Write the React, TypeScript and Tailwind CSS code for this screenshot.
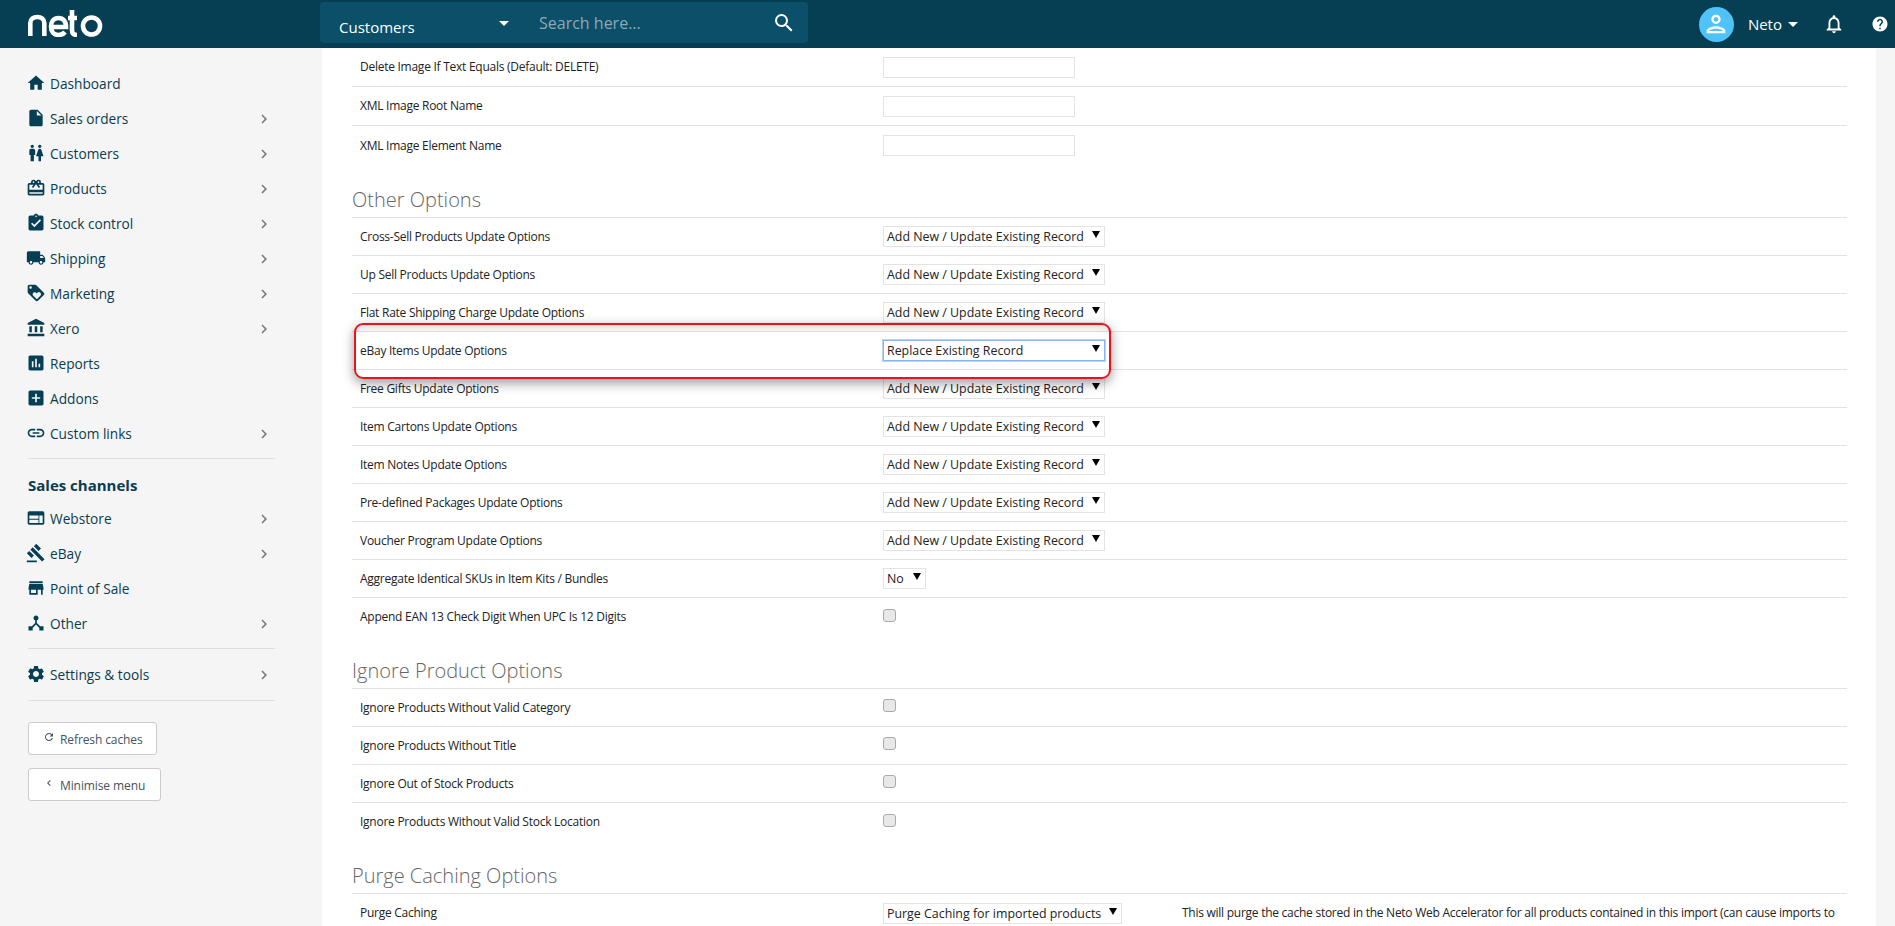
import React from "react"
import {
  MdAccountBalance,
  MdAddBox,
  MdArrowDropDown,
  MdAssessment,
  MdAssignmentTurnedIn,
  MdCardGiftcard,
  MdChevronLeft,
  MdChevronRight,
  MdDeviceHub,
  MdGavel,
  MdHelp,
  MdHome,
  MdInsertDriveFile,
  MdLink,
  MdLocalShipping,
  MdLoyalty,
  MdNotificationsNone,
  MdOutlinePerson,
  MdRefresh,
  MdSearch,
  MdSettings,
  MdStore,
  MdWc,
  MdWeb,
} from "react-icons/md"

const font = "font-['Open_Sans',sans-serif]"

const NavItem = ({ icon: Icon, label, more = true }: { icon: any; label: string; more?: boolean }) => (
  <div className="flex items-center h-[35px] w-[247px] text-[13.7px] text-[#0b3c50]">
    <Icon className="w-5 h-5 -ml-[2px] mr-1 -mt-0.5 text-[#063f54]" />
    <span className="flex-1 mt-[2px]">{label}</span>
    {more && <MdChevronRight className="w-[18px] h-[18px] mr-[2px] mt-[1px] text-[#777]" />}
  </div>
)

const Divider = () => <div className="w-[247px] border-t border-[#ddd]" />

const Row = ({ label, last, tall, children }: { label: string; last?: boolean; tall?: boolean; children?: React.ReactNode }) => (
  <div
    className={`flex items-center pl-2 text-[12px] tracking-[-0.26px] text-[#222] ${tall ? "h-[39px]" : "h-[38px]"} ${
      last ? "" : "border-b border-[#e2e2e2]"
    }`}
  >
    <div className="w-[523px] shrink-0">{label}</div>
    {children}
  </div>
)

const Input = () => <div className="w-[192px] h-[21px] bg-white border border-[#e3e3e3]" />

const Select = ({ value, w = "w-[222px]", focus }: { value: string; w?: string; focus?: boolean }) => (
  <div
    className={`${w} h-[21px] flex items-center justify-between px-[3px] bg-white border text-[12.4px] tracking-normal whitespace-nowrap text-[#222] ${
      focus ? "border-[#8ab4f0] shadow-[0_0_0_1px_#b9d2f7]" : "border-[#e3e3e3]"
    }`}
  >
    <span className="mt-[2px]">{value}</span>
    <svg viewBox="0 0 8 7" className="w-2 h-[7px] mr-[1px] -mt-1 fill-black">
      <path d="M0 0h8L4 7z" />
    </svg>
  </div>
)

const Check = () => (
  <div className="w-[13px] h-[13px] -mt-1 rounded-[3px] border border-[#aaa] bg-[#e8e8e8]" />
)

const Heading = ({ children }: { children: React.ReactNode }) => (
  <div className="h-[53px] flex items-end pb-[2px] border-b border-[#e2e2e2] text-[20px] font-light text-[#666]">
    {children}
  </div>
)

const updateOptions = [
  "Cross-Sell Products Update Options",
  "Up Sell Products Update Options",
  "Flat Rate Shipping Charge Update Options",
  "eBay Items Update Options",
  "Free Gifts Update Options",
  "Item Cartons Update Options",
  "Item Notes Update Options",
  "Pre-defined Packages Update Options",
  "Voucher Program Update Options",
]

const ignoreOptions = [
  "Ignore Products Without Valid Category",
  "Ignore Products Without Title",
  "Ignore Out of Stock Products",
  "Ignore Products Without Valid Stock Location",
]

const App = () => {
  return (
    <div className={`h-screen flex flex-col overflow-hidden bg-white ${font}`}>
      <header className="h-12 shrink-0 flex items-center bg-[#063f54] text-white">
        <div className="w-[320px] shrink-0 pl-7">
          <svg viewBox="0 0 76 30" className="w-[76px] h-[30px] -mt-1 fill-none stroke-white stroke-[4.6]">
            <path d="M2.300 29V16c0-4 3-6 7-6s7 2 7 6v13" />
            <path d="M23 20h15c0-6-3-9-7.500-9S23 14 23 19.500 26 28 30.500 28c3 0 5-1 6.500-3" />
            <path d="M44 3v20c0 3 1 5 5 5M40 11h9" />
            <circle cx="63.500" cy="19" r="8.500" />
          </svg>
        </div>
        <div className="w-[488px] h-[41px] -mt-[3px] flex items-center rounded bg-[#0b4f69]">
          <div className="w-[219px] pl-[19px] flex items-center justify-between pr-[24px]">
            <span className="text-[15px] mt-[10px]">Customers</span>
            <MdArrowDropDown className="w-6 h-6 -mr-[1px]" />
          </div>
          <span className="flex-1 text-[16px] text-[#8ea9b5]">Search here...</span>
          <MdSearch className="w-6 h-6 mr-3" />
        </div>
        <div className="flex-1" />
        <div className="w-[35px] h-[35px] rounded-full bg-[#4fc3f7] flex items-center justify-center">
          <MdOutlinePerson className="w-7 h-7" />
        </div>
        <span className="ml-[14px] text-[15px]">Neto</span>
        <MdArrowDropDown className="w-6 h-6 -ml-[1px]" />
        <MdNotificationsNone className="w-[22px] h-[22px] ml-[18px]" />
        <MdHelp className="w-[18px] h-[18px] ml-[26px] mr-[6px]" />
      </header>

      <div className="flex-1 min-h-0 flex">
        <aside className="w-[322px] shrink-0 bg-[#f5f5f5] pl-7 pt-[18px]">
          <NavItem icon={MdHome} label="Dashboard" more={false} />
          <NavItem icon={MdInsertDriveFile} label="Sales orders" />
          <NavItem icon={MdWc} label="Customers" />
          <NavItem icon={MdCardGiftcard} label="Products" />
          <NavItem icon={MdAssignmentTurnedIn} label="Stock control" />
          <NavItem icon={MdLocalShipping} label="Shipping" />
          <NavItem icon={MdLoyalty} label="Marketing" />
          <NavItem icon={MdAccountBalance} label="Xero" />
          <NavItem icon={MdAssessment} label="Reports" more={false} />
          <NavItem icon={MdAddBox} label="Addons" more={false} />
          <NavItem icon={MdLink} label="Custom links" />
          <div className="mt-[7px]">
            <Divider />
          </div>
          <div className="mt-4 mb-[6px] text-[15px] leading-5 font-bold text-[#0b3c50]">Sales channels</div>
          <NavItem icon={MdWeb} label="Webstore" />
          <NavItem icon={MdGavel} label="eBay" />
          <NavItem icon={MdStore} label="Point of Sale" more={false} />
          <NavItem icon={MdDeviceHub} label="Other" />
          <div className="mt-[7px]">
            <Divider />
          </div>
          <div className="mt-2">
            <NavItem icon={MdSettings} label="Settings & tools" />
          </div>
          <div className="mt-2">
            <Divider />
          </div>
          <div className="mt-[21px] flex flex-col items-start gap-[13px] text-[12px] tracking-[-0.1px] text-[#45545c]">
            <button className="h-[33px] w-[129px] flex items-center pl-[14px] rounded-[3px] border border-[#ccc] bg-white">
              <MdRefresh className="w-3 h-3 mr-[5px] -mt-1" />
              <span className="mt-[2px]">Refresh caches</span>
            </button>
            <button className="h-[33px] w-[133px] flex items-center pl-[14px] rounded-[3px] border border-[#ccc] bg-white">
              <MdChevronLeft className="w-3 h-3 mr-[5px] -mt-1" />
              <span className="mt-[2px]">Minimise menu</span>
            </button>
          </div>
        </aside>

        <main className="relative flex-1 min-w-0 pl-[30px] pr-[29px]">
          <Row label="Delete Image If Text Equals (Default: DELETE)" tall>
            <Input />
          </Row>
          <Row label="XML Image Root Name" tall>
            <Input />
          </Row>
          <Row label="XML Image Element Name" tall last>
            <Input />
          </Row>

          <Heading>Other Options</Heading>
          {updateOptions.map((label) => (
            <Row key={label} label={label}>
              {label.startsWith("eBay") ? (
                <Select value="Replace Existing Record" focus />
              ) : (
                <Select value="Add New / Update Existing Record" />
              )}
            </Row>
          ))}
          <Row label="Aggregate Identical SKUs in Item Kits / Bundles">
            <Select value="No" w="w-[43px]" />
          </Row>
          <Row label="Append EAN 13 Check Digit When UPC Is 12 Digits" last>
            <Check />
          </Row>

          <Heading>Ignore Product Options</Heading>
          {ignoreOptions.map((label, i) => (
            <Row key={label} label={label} last={i === ignoreOptions.length - 1}>
              <Check />
            </Row>
          ))}

          <Heading>Purge Caching Options</Heading>
          <Row label="Purge Caching" last>
            <Select value="Purge Caching for imported products" w="w-[239px]" />
            <span className="ml-[60px] whitespace-nowrap">
              This will purge the cache stored in the Neto Web Accelerator for all products contained in this import (can cause imports to
            </span>
          </Row>

          {/* red annotation box drawn over the screenshot */}
          <div className="absolute left-[32px] top-[275px] w-[757px] h-[56px] rounded-[9px] border-2 border-[#e8141c] shadow-[0_4px_12px_rgba(0,0,0,0.4),inset_0_8px_8px_-6px_rgba(0,0,0,0.18)]" />
        </main>

        <div className="w-[19px] shrink-0 bg-[#f5f5f5]" />
      </div>
    </div>
  )
}

export default App
